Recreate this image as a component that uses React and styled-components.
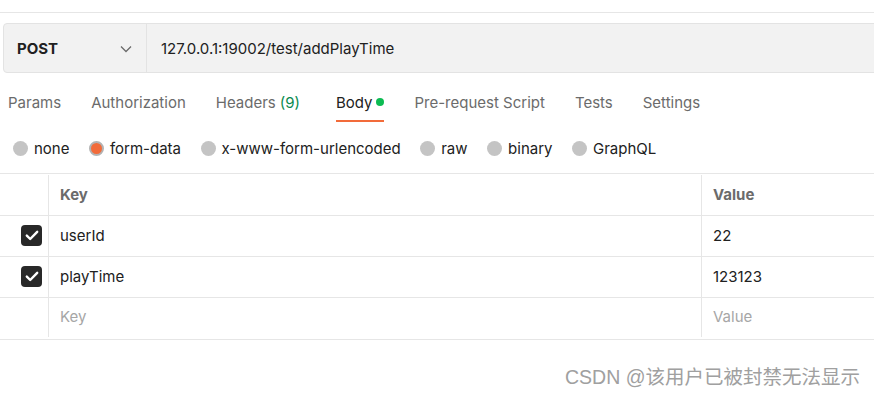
import React from 'react';
import styled, { createGlobalStyle } from 'styled-components';

const GlobalStyle = createGlobalStyle`
  html, body {
    margin: 0;
    padding: 0;
    background: #ffffff;
  }
  body {
    font-family: Inter, "Noto Sans", sans-serif;
    overflow: hidden;
  }
`;

const tabs = [
  { label: 'Params' },
  { label: 'Authorization' },
  { label: 'Headers', count: '(9)' },
  { label: 'Body', active: true, dot: true },
  { label: 'Pre-request Script' },
  { label: 'Tests' },
  { label: 'Settings' },
];

const bodyTypes = [
  { label: 'none' },
  { label: 'form-data', selected: true },
  { label: 'x-www-form-urlencoded' },
  { label: 'raw' },
  { label: 'binary' },
  { label: 'GraphQL' },
];

const rows = [
  { key: 'userId', value: '22', checked: true },
  { key: 'playTime', value: '123123', checked: true },
];

const App = () => {
  return (
    <Page>
      <GlobalStyle />
      <TopStrip />
      <RequestBar>
        <MethodBox>
          <Method>POST</Method>
          <svg width="12" height="8" viewBox="0 0 12 8">
            <path d="M1 1.5 L6 6.5 L11 1.5" fill="none" stroke="#6b6b6b" strokeWidth="1.3" />
          </svg>
        </MethodBox>
        <UrlText>127.0.0.1:19002/test/addPlayTime</UrlText>
      </RequestBar>

      <TabBar>
        {tabs.map((t) => (
          <Tab key={t.label} active={t.active}>
            {t.label}
            {t.count && <Count>{t.count}</Count>}
            {t.dot && <Dot />}
          </Tab>
        ))}
      </TabBar>

      <RadioRow>
        {bodyTypes.map((b) => (
          <RadioItem key={b.label}>
            <Radio selected={b.selected} />
            {b.label}
          </RadioItem>
        ))}
      </RadioRow>

      <Table>
        <Row>
          <Cell />
          <HeadCell>Key</HeadCell>
          <HeadCell>Value</HeadCell>
        </Row>
        {rows.map((r) => (
          <Row key={r.key}>
            <Cell center>
              {r.checked && (
                <CheckBox>
                  <svg width="14" height="11" viewBox="0 0 14 11">
                    <path d="M1.8 5.6 L5.2 9 L12.2 1.8" fill="none" stroke="#fff" strokeWidth="2.4" strokeLinecap="round" strokeLinejoin="round" />
                  </svg>
                </CheckBox>
              )}
            </Cell>
            <TextCell>{r.key}</TextCell>
            <TextCell>{r.value}</TextCell>
          </Row>
        ))}
        <Row tall>
          <Cell />
          <TextCell placeholder>Key</TextCell>
          <TextCell placeholder>Value</TextCell>
        </Row>
      </Table>

      <Footer>
        <Watermark>CSDN @该用户已被封禁无法显示</Watermark>
      </Footer>
    </Page>
  );
};

const Page = styled.div`
  width: 874px;
  height: 397px;
  overflow: hidden;
  color: #212121;
`;

const TopStrip = styled.div`
  height: 12px;
  border-bottom: 1px solid #e6e6e6;
`;

const RequestBar = styled.div`
  display: flex;
  align-items: stretch;
  margin: 10px 0 0 3px;
  width: 900px;
  height: 48px;
  background: #f2f2f2;
  border: 1px solid #e3e3e3;
  border-radius: 4px 0 0 4px;
`;

const MethodBox = styled.div`
  display: flex;
  align-items: center;
  justify-content: space-between;
  width: 143px;
  box-sizing: border-box;
  padding: 1px 14px 0 13px;
  border-right: 1px solid #e3e3e3;
`;

const Method = styled.span`
  font-size: 15px;
  font-weight: 700;
  color: #212121;
`;

const UrlText = styled.span`
  display: flex;
  align-items: center;
  padding-left: 14px;
  font-size: 15px;
  color: #212121;
`;

const TabBar = styled.div`
  display: flex;
  gap: 30px;
  padding: 0 0 0 8px;
  margin-top: 11px;
`;

const Tab = styled.div`
  display: flex;
  align-items: center;
  height: 38px;
  box-sizing: border-box;
  font-size: 15px;
  color: ${(p) => (p.active ? '#212121' : '#6b6b6b')};
  border-bottom: 2px solid ${(p) => (p.active ? '#f26b3a' : 'transparent')};
`;

const Count = styled.span`
  margin: 0 6px 0 4px;
  color: #0b8a4f;
`;

const Dot = styled.span`
  width: 8px;
  height: 8px;
  margin-left: 4px;
  border-radius: 50%;
  background: #0cbb52;
`;

const RadioRow = styled.div`
  display: flex;
  align-items: center;
  gap: 19.5px;
  height: 26px;
  margin-top: 13px;
  padding-left: 13px;
`;

const RadioItem = styled.div`
  display: flex;
  align-items: center;
  gap: 6px;
  font-size: 15px;
  color: #212121;
`;

const Radio = styled.span`
  width: 15px;
  height: 15px;
  box-sizing: border-box;
  border-radius: 50%;
  background: ${(p) => (p.selected ? '#f26b3a' : '#c4c4c4')};
  border: ${(p) => (p.selected ? '2px solid #b3b3b3' : 'none')};
`;

const Table = styled.div`
  margin-top: 12px;
  padding: 1px 0 2px;
  border-top: 1px solid #e6e6e6;
  border-bottom: 1px solid #e6e6e6;
`;

const Row = styled.div`
  display: grid;
  grid-template-columns: 48px 653px 1fr;
  height: ${(p) => (p.tall ? '39px' : '40px')};
  & + & {
    border-top: 1px solid #e6e6e6;
  }
`;

const Cell = styled.div`
  display: flex;
  align-items: center;
  justify-content: ${(p) => (p.center ? 'flex-end' : 'flex-start')};
  padding-right: ${(p) => (p.center ? '6px' : '0')};
  padding-bottom: 2px;
  & + & {
    border-left: 1px solid #e6e6e6;
  }
`;

const HeadCell = styled(Cell)`
  padding-left: 11px;
  font-size: 15px;
  font-weight: 700;
  color: #6b6b6b;
`;

const TextCell = styled(Cell)`
  padding-left: 11px;
  font-size: 15px;
  color: ${(p) => (p.placeholder ? '#a6a6a6' : '#212121')};
`;

const CheckBox = styled.span`
  display: flex;
  align-items: center;
  justify-content: center;
  width: 21px;
  height: 21px;
  border-radius: 4px;
  background: #282828;
`;

const Footer = styled.div`
  display: flex;
  justify-content: flex-end;
  padding: 21px 14px 0 0;
`;

const Watermark = styled.span`
  font-family: "Liberation Sans", "Noto Sans CJK SC", sans-serif;
  font-size: 19.5px;
  color: #a0a0a0;
`;

export default App;
